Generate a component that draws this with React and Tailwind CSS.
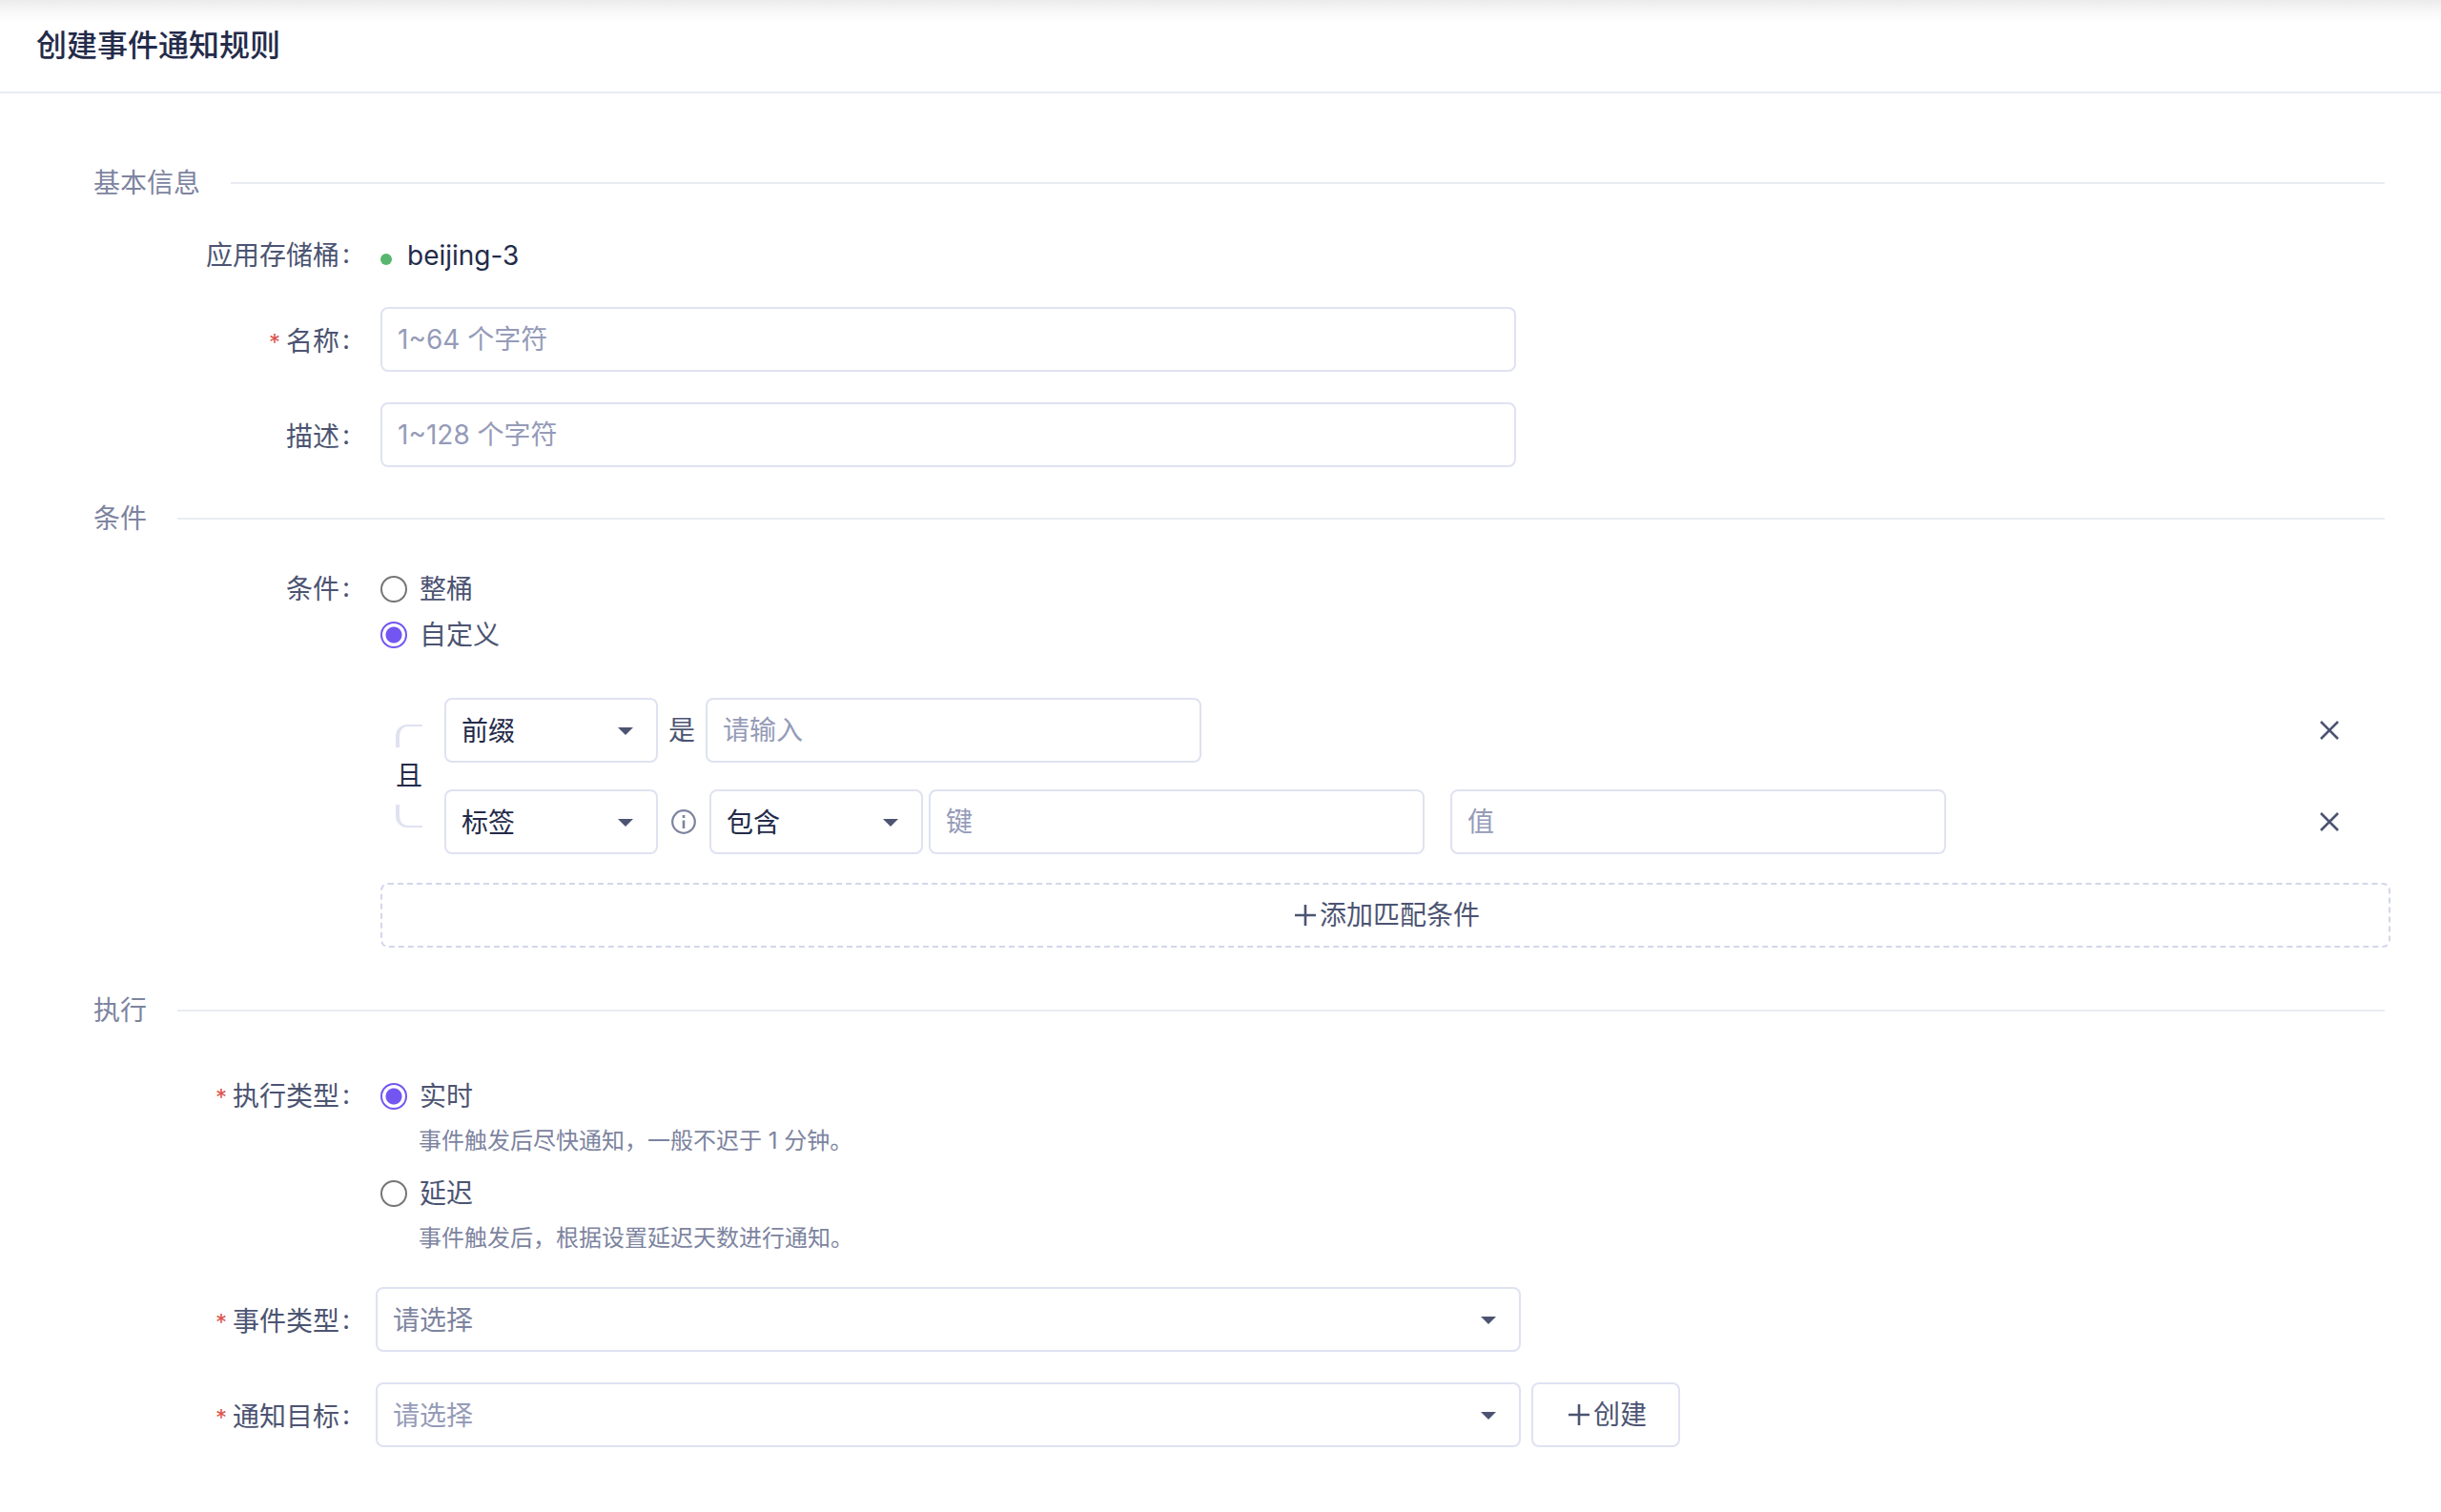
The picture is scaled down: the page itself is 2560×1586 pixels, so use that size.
import React, { useState } from "react";
import clsx from "clsx";

const fieldStyle =
  "h-[68px] rounded-lg border-2 border-[#dfe2f1] bg-white text-[28px] outline-none focus:border-[#7356f2]";

const Section = ({ title, className, children }) => (
  <section className={className}>
    <div className="mr-1.5 flex items-center gap-8">
      <h2 className="text-[28px] leading-10 text-[#7d849f]">{title}</h2>
      <div className="h-0.5 flex-1 bg-[#e9ecf3]" />
    </div>
    {children}
  </section>
);

const Label = ({ htmlFor, id, required, tall, wide, children }) => (
  <label
    id={id}
    htmlFor={htmlFor}
    className={clsx(
      "flex shrink-0 items-start justify-end gap-1.5 leading-10",
      wide ? "w-[296px] pr-[27px]" : "w-[301px] pr-8",
      tall && "pt-4"
    )}
  >
    {required && (
      <span className="pt-1 text-2xl leading-9 text-[#dd524c]">*</span>
    )}
    <span className="flex gap-[3px]">
      {children}
      <span className="leading-9">:</span>
    </span>
  </label>
);

const TextInput = ({ className, ...props }) => (
  <input
    type="text"
    className={clsx(
      fieldStyle,
      "min-w-0 px-4 text-[#242b4a] placeholder:text-[#959bb8]",
      className
    )}
    {...props}
  />
);

const Select = ({ className, color = "text-[#242b4a]", children, ...props }) => (
  <div className={clsx("relative", className)}>
    <select
      className={clsx(
        fieldStyle,
        "w-full appearance-none pt-0.5 pr-12 pl-4",
        color
      )}
      {...props}
    >
      {children}
    </select>
    <svg
      viewBox="0 0 16 8"
      className="pointer-events-none absolute top-[31px] right-[26px] h-2 w-4 fill-[#4c5472]"
    >
      <path d="M0 0h16L8 8z" />
    </svg>
  </div>
);

const Radio = ({ label, ...props }) => (
  <label className="flex items-center gap-[13px] leading-10">
    <input
      type="radio"
      className="size-7 appearance-none rounded-full border-2 border-[#767676] bg-white checked:border-[#7356f2] checked:bg-[radial-gradient(circle,#7356f2_8px,transparent_9px)]"
      {...props}
    />
    {label}
  </label>
);

const PlusIcon = () => (
  <svg viewBox="0 0 22 22" className="size-[22px] stroke-current" fill="none">
    <path d="M11 0v22M0 11h22" strokeWidth="2.6" />
  </svg>
);

const InfoIcon = () => (
  <svg viewBox="0 0 26 26" className="size-[26px] text-[#7d849f]" fill="none">
    <circle cx="13" cy="13" r="11.8" stroke="currentColor" strokeWidth="2.2" />
    <path d="M13 11.6v8.4M13 6v3" stroke="currentColor" strokeWidth="2.6" />
  </svg>
);

const RemoveButton = () => (
  <button
    type="button"
    aria-label="删除"
    className="mr-[54px] ml-auto shrink-0 cursor-pointer"
  >
    <svg viewBox="0 0 20 20" className="size-5" fill="none">
      <path d="M1 1l18 18M19 1L1 19" stroke="#4c5472" strokeWidth="2.6" />
    </svg>
  </button>
);

const App = () => {
  const [scope, setScope] = useState("custom");
  const [execution, setExecution] = useState("realtime");

  return (
    <div className="min-h-screen bg-white pb-16 font-['Inter','Noto_Sans_CJK_SC',sans-serif] text-[28px] text-[#4c5472]">
      <header className="border-b-2 border-[#e9ecf3] bg-[linear-gradient(#ebebeb,#f8f8f8_12px,#ffffff_24px)] px-[38px] py-6">
        <h1 className="text-[32px] leading-12 font-medium text-[#242b4a]">
          创建事件通知规则
        </h1>
      </header>

      <form className="pt-[74px] pr-[53px] pl-[98px]">
        <Section title="基本信息">
          <div className="mt-9 flex">
            <Label>应用存储桶</Label>
            <div className="flex items-center gap-4 leading-10 text-[#242b4a]">
              <span className="mt-2 size-3 rounded-full bg-[#58b76f]" />
              beijing-3
            </div>
          </div>
          <div className="mt-[34px] flex">
            <Label htmlFor="name" required tall>
              名称
            </Label>
            <TextInput
              id="name"
              placeholder="1~64 个字符"
              className="w-full max-w-[1191px]"
            />
          </div>
          <div className="mt-8 flex">
            <Label htmlFor="description" tall>
              描述
            </Label>
            <TextInput
              id="description"
              placeholder="1~128 个字符"
              className="w-full max-w-[1191px]"
            />
          </div>
        </Section>

        <Section title="条件" className="mt-[34px]">
          <div className="mt-[34px] flex">
            <Label id="scope-label">条件</Label>
            <div
              role="radiogroup"
              aria-labelledby="scope-label"
              className="flex flex-col gap-2"
            >
              <Radio
                name="scope"
                label="整桶"
                checked={scope === "bucket"}
                onChange={() => setScope("bucket")}
              />
              <Radio
                name="scope"
                label="自定义"
                checked={scope === "custom"}
                onChange={() => setScope("custom")}
              />
            </div>
          </div>

          <div className="mt-[46px] ml-[301px]">
            <div className="flex">
              {/* AND bracket joining the two rules */}
              <div className="mr-[23px] ml-4 flex w-7 flex-col py-7 text-[#242b4a]">
                <div className="h-6 rounded-tl-xl border-t-2 border-l-4 border-[#dfe2f1]" />
                <span className="my-auto leading-10">且</span>
                <div className="h-6 rounded-bl-xl border-b-2 border-l-4 border-[#dfe2f1]" />
              </div>

              <div className="flex flex-1 flex-col gap-7">
                <div className="flex items-center">
                  <Select aria-label="条件类型" className="w-56">
                    <option>前缀</option>
                  </Select>
                  <span className="mx-[11px]">是</span>
                  <TextInput
                    aria-label="前缀"
                    placeholder="请输入"
                    className="w-[520px]"
                  />
                  <RemoveButton />
                </div>
                <div className="flex items-center">
                  <Select aria-label="条件类型" className="w-56">
                    <option>标签</option>
                  </Select>
                  <span className="mx-3.5">
                    <InfoIcon />
                  </span>
                  <Select aria-label="匹配方式" className="w-56">
                    <option>包含</option>
                  </Select>
                  <TextInput
                    aria-label="键"
                    placeholder="键"
                    className="ml-1.5 w-[520px]"
                  />
                  <TextInput
                    aria-label="值"
                    placeholder="值"
                    className="ml-[27px] w-[520px]"
                  />
                  <RemoveButton />
                </div>
              </div>
            </div>

            <button
              type="button"
              className="mt-[30px] flex h-[68px] w-full cursor-pointer items-center justify-center gap-1 rounded-lg border-2 border-dashed border-[#d3d7ea] pl-1"
            >
              <PlusIcon />
              添加匹配条件
            </button>
          </div>
        </Section>

        <Section title="执行" className="mt-[46px]">
          <div className="mt-[50px] flex items-start">
            <Label id="execution-label" required>
              执行类型
            </Label>
            <div role="radiogroup" aria-labelledby="execution-label">
              <Radio
                name="execution"
                label="实时"
                checked={execution === "realtime"}
                onChange={() => setExecution("realtime")}
              />
              <p className="mt-[7px] pl-10 text-2xl leading-10 text-[#7d849f]">
                事件触发后尽快通知，一般不迟于 1 分钟。
              </p>
              <div className="mt-[15px]">
                <Radio
                  name="execution"
                  label="延迟"
                  checked={execution === "delayed"}
                  onChange={() => setExecution("delayed")}
                />
              </div>
              <p className="mt-[7px] pl-10 text-2xl leading-10 text-[#7d849f]">
                事件触发后，根据设置延迟天数进行通知。
              </p>
            </div>
          </div>

          <div className="mt-[31px] flex">
            <Label htmlFor="event-type" required tall wide>
              事件类型
            </Label>
            <Select
              id="event-type"
              className="w-full max-w-[1201px]"
              color="text-[#7d849f]"
            >
              <option>请选择</option>
            </Select>
          </div>
          <div className="mt-8 flex">
            <Label htmlFor="target" required tall wide>
              通知目标
            </Label>
            <Select
              id="target"
              className="w-full max-w-[1201px]"
              color="text-[#959bb8]"
            >
              <option>请选择</option>
            </Select>
            <button
              type="button"
              className={clsx(
                fieldStyle,
                "ml-[11px] flex w-[156px] shrink-0 cursor-pointer items-center justify-center gap-1 pl-1"
              )}
            >
              <PlusIcon />
              创建
            </button>
          </div>
        </Section>
      </form>
    </div>
  );
};

export default App;
